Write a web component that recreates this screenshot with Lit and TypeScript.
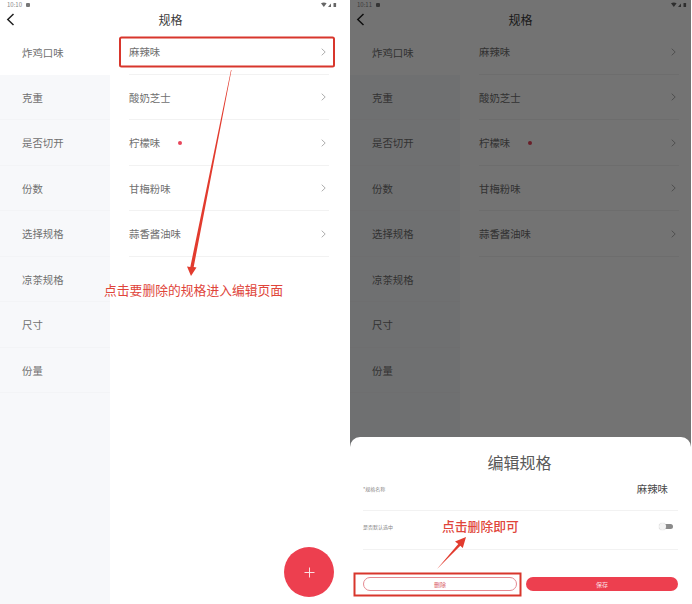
import { LitElement, html, css, svg } from "lit";
import { customElement, property } from "lit/decorators.js";

const CATEGORIES = ["炸鸡口味", "克重", "是否切开", "份数", "选择规格", "凉茶规格", "尺寸", "份量"];
const SPECS = ["麻辣味", "酸奶芝士", "柠檬味", "甘梅粉味", "蒜香酱油味"];

@customElement("spec-phone")
class SpecPhone extends LitElement {
  @property() time = "10:10";
  @property({ type: Boolean }) fab = false;

  static styles = css`
    :host { display: flex; flex-direction: column; position: relative; width: 341px; height: 604px; background: #fff; overflow: hidden; color: #666; }
    .status { height: 9px; display: flex; align-items: center; justify-content: space-between; padding: 0 4px 0 7px; font-size: 6px; color: #888; }
    .status-left { display: flex; align-items: center; gap: 4px; }
    .status-left i { width: 4px; height: 4px; background: #777; display: block; border-radius: 1px; }
    .bar { height: 20px; position: relative; display: flex; align-items: center; justify-content: center; font-size: 12px; color: #3a3a3a; }
    .back { position: absolute; left: 6px; top: 4px; }
    .main { flex: 1; display: flex; min-height: 0; }
    .side { width: 110px; background: #f7f8fa; display: flex; flex-direction: column; }
    .cat { height: 45.5px; flex: none; display: flex; align-items: center; padding: 1px 0 0 22px; font-size: 10.4px; color: #707070; box-sizing: border-box; border-bottom: 1px solid #f3f4f6; }
    .cat.on { background: #fff; border-bottom: none; }
    .list { flex: 1; padding: 0 12px 0 19px; }
    .spec { height: 45.5px; padding: 1px 3px 0 0; box-sizing: border-box; display: flex; align-items: center; font-size: 10.4px; color: #707070; border-bottom: 1px solid #f2f2f2; position: relative; }
    .name { flex: 1; }
    .dot { position: absolute; left: 49px; width: 4px; height: 4px; border-radius: 50%; background: #e8455a; }
    .fab { position: absolute; left: 284px; top: 547px; width: 50px; height: 50px; border-radius: 50%; background: #ed3f4f; display: flex; align-items: center; justify-content: center; }
  `;

  render() {
    return html`
      <div class="status">
        <div class="status-left"><span>${this.time}</span><i></i></div>
        <svg width="16" height="6" viewBox="0 0 16 6">
          <path d="M0 1.2Q2.8-.4 5.6 1.2L2.8 5Z" fill="#666" />
          <path d="M7 5L10 1.5V5Z" fill="#666" />
          <rect x="12.5" y="1" width="2.6" height="4" rx=".5" fill="#666" />
        </svg>
      </div>
      <div class="bar">
        <svg class="back" width="9" height="13" viewBox="0 0 9 13">
          <path d="M7.5 1L1.8 6.5l5.7 5.5" fill="none" stroke="#222" stroke-width="1.5" />
        </svg>
        规格
      </div>
      <div class="main">
        <div class="side">
          ${CATEGORIES.map((c, i) => html`<div class="cat ${i === 0 ? "on" : ""}">${c}</div>`)}
        </div>
        <div class="list">
          ${SPECS.map(
            (s, i) => html`<div class="spec">
              <span class="name">${s}</span>
              ${i === 2 ? html`<span class="dot"></span>` : ""}
              <svg width="5" height="8" viewBox="0 0 5 8"><path d="M.7.7L4.2 4 .7 7.3" fill="none" stroke="#999" stroke-width=".8" /></svg>
            </div>`
          )}
        </div>
      </div>
      ${this.fab
        ? html`<div class="fab">
            <svg width="11" height="11" viewBox="0 0 11 11"><path d="M5.5.5v10M.5 5.5h10" stroke="#fbdfe2" stroke-width="1" /></svg>
          </div>`
        : ""}
      <slot></slot>
    `;
  }
}

@customElement("app-root")
export class AppRoot extends LitElement {
  static styles = css`
    :host { display: flex; gap: 9px; position: relative; width: 692px; height: 604px; background: #fff; overflow: hidden; font-family: "Noto Sans CJK SC", "Noto Sans", sans-serif; }
    .scrim { position: absolute; inset: 0; background: rgba(0, 0, 0, 0.55); display: flex; flex-direction: column; justify-content: flex-end; }
    .sheet { height: 167px; background: #fff; border-radius: 10px 10px 0 0; box-sizing: border-box; padding: 12px 13px 0 13px; display: flex; flex-direction: column; color: #555; }
    .title { text-align: center; font-size: 16px; line-height: 26px; color: #5a5a5a; padding-right: 2px; }
    .row { display: flex; align-items: center; justify-content: space-between; border-bottom: 1px solid #f2f2f2; font-size: 5px; color: #888; }
    .row.first { height: 36px; padding-bottom: 8px; box-sizing: border-box; }
    .row.second { height: 39px; padding-bottom: 7px; box-sizing: border-box; }
    .value { font-size: 10.4px; color: #4a4a4a; margin-right: 10px; }
    .toggle { position: relative; width: 14px; height: 5px; background: #8a8a8a; border-radius: 3px; margin-right: 5px; }
    .toggle::before { content: ""; position: absolute; left: 0; top: -1px; width: 7px; height: 7px; background: #f4f4f4; border-radius: 50%; box-shadow: 0 0 1px #bbb; }
    .buttons { display: flex; gap: 9px; margin-top: 27px; }
    .btn { flex: 1; height: 14px; border-radius: 7px; box-sizing: border-box; display: flex; align-items: center; justify-content: center; font-size: 6px; }
    .del { border: 1px solid #e58a92; color: #d9636d; background: #fff; }
    .save { background: #ed3f4f; color: #fbdfe2; }
    .marks { position: absolute; left: 0; top: 0; pointer-events: none; }
    .note { position: absolute; font-size: 12.8px; line-height: 16px; color: #e0453a; white-space: nowrap; }
    .note.a { left: 104px; top: 282px; }
    .note.b { left: 442px; top: 518px; font-weight: 500; }
  `;

  render() {
    return html`
      <spec-phone fab></spec-phone>
      <spec-phone time="10:11">
        <div class="scrim">
          <div class="sheet">
            <div class="title">编辑规格</div>
            <div class="row first"><span>*规格名称</span><span class="value">麻辣味</span></div>
            <div class="row second"><span>是否默认选中</span><span class="toggle"></span></div>
            <div class="buttons">
              <div class="btn del">删除</div>
              <div class="btn save">保存</div>
            </div>
          </div>
        </div>
      </spec-phone>
      <svg class="marks" width="692" height="604" viewBox="0 0 692 604">
        ${svg`
          <rect x="120" y="37.5" width="214" height="29" rx="1.5" fill="none" stroke="#d8362c" stroke-width="2" />
          <rect x="354.5" y="573.5" width="166" height="22" fill="none" stroke="#d8362c" stroke-width="2" />
          <path d="M231 70L231.5 70 193.7 267 196.5 267.5 191 276 187 266.5 190.3 267Z" fill="#e23b2e" />
          <path d="M437 569L458.3 544 455 541.5 466 537 462.8 548 460.3 545.8Z" fill="#e23b2e" />
        `}
      </svg>
      <span class="note a">点击要删除的规格进入编辑页面</span>
      <span class="note b">点击删除即可</span>
    `;
  }
}
